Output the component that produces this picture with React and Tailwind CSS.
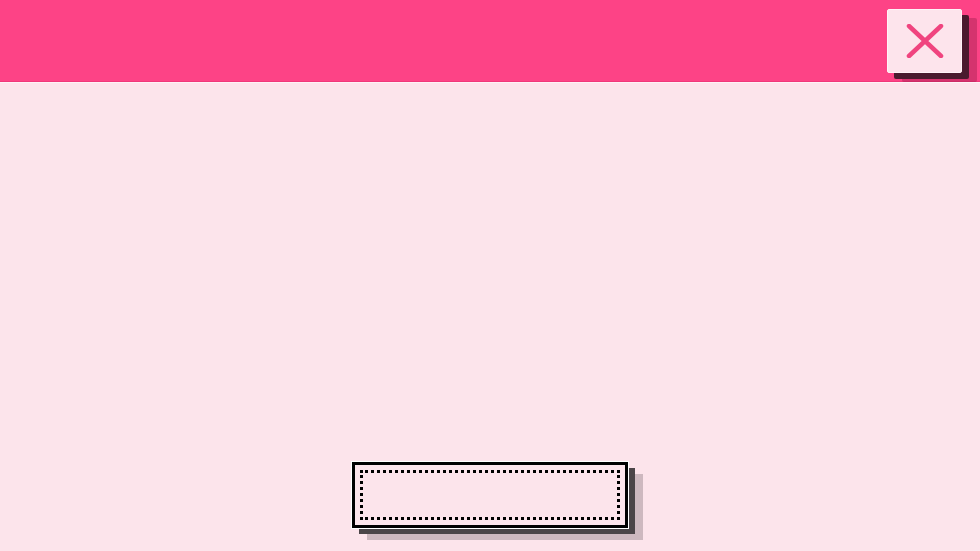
import React from "react";

export default function App() {
  return (
    <div className="flex h-[551px] w-[980px] flex-col overflow-hidden bg-[#fce4eb] font-['Liberation_Sans',sans-serif]">
      <header className="relative z-0 flex h-[82px] shrink-0 justify-end border-b border-[#f0387a] bg-[#fd4386] pr-[18px] pt-[9px] shadow-[0_1px_0_#fff2f6]">
        <CloseButton />
      </header>

      <main className="flex flex-1 items-end justify-center pb-[23px]">
        <div className="h-[66px] w-[276px] border-[3px] border-black bg-[#fce4eb] p-[5px] shadow-[0_0_0_1px_#ffffff,7px_6px_0_#4b4548,15px_12px_0_#cdb8bf]">
          <div className="h-full w-full border-[3px] border-dotted border-black" />
        </div>
      </main>
    </div>
  );
}

function CloseButton() {
  return (
    <button
      aria-label="Close"
      className="relative z-10 flex h-[64px] w-[75px] items-center justify-center rounded-[2px] border border-[#fff3f7] bg-[#fde4ec] shadow-[7px_6px_0_#4a1a2e,15px_9px_0_rgba(110,10,50,0.28)]"
    >
      <svg width="38" height="34" viewBox="0 0 38 34" fill="none">
        <path
          d="M3 2 L35 32 M35 2 L3 32"
          stroke="#f0447f"
          strokeWidth="4.5"
          strokeLinecap="round"
        />
      </svg>
    </button>
  );
}
